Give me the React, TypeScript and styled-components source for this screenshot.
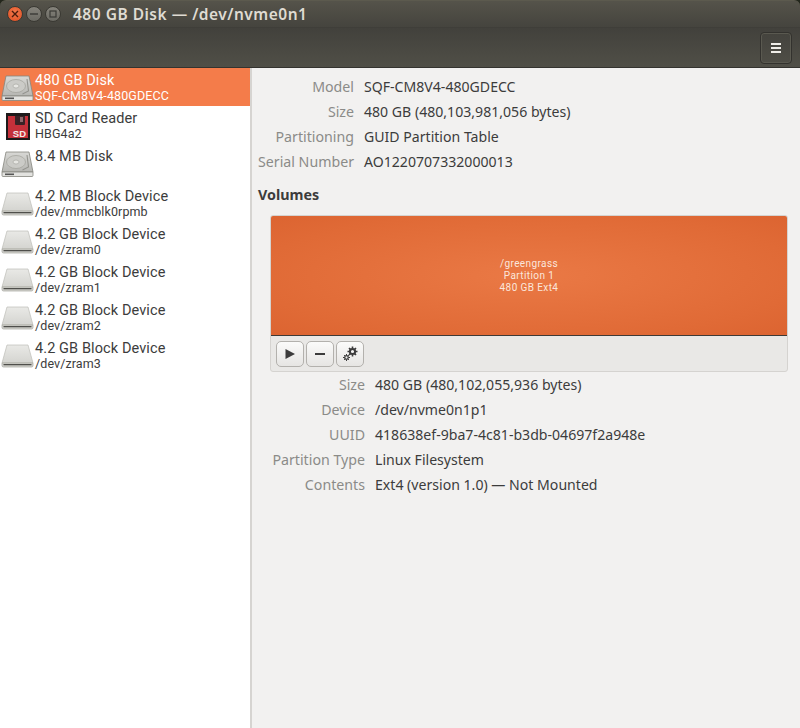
import React from 'react'
import styled, { createGlobalStyle } from 'styled-components'

const GlobalStyle = createGlobalStyle`
    html, body {
        margin: 0;
        padding: 0;
        background: #f2f1f0;
    }
    body {
        font-family: "Noto Sans", "Open Sans", sans-serif;
        color: #3c3c3c;
    }
`

const HardDiskIcon: React.FC = () => (
    <svg width="33" height="28" viewBox="0 0 33 28">
        <defs>
            <linearGradient id="hddTop" x1="0" y1="0" x2="0" y2="1">
                <stop offset="0" stopColor="#d8d8d5" />
                <stop offset="1" stopColor="#b6b6b2" />
            </linearGradient>
        </defs>
        <path d="M5 2h23l4 20H1z" fill="url(#hddTop)" stroke="#85857e" strokeWidth="0.8" />
        <path d="M1 22h31v3.5a1 1 0 0 1-1 1H2a1 1 0 0 1-1-1z" fill="#e2e2df" stroke="#85857e" strokeWidth="0.8" />
        <ellipse cx="15" cy="12" rx="9.5" ry="6.5" fill="#cbcbc7" stroke="#a0a09a" strokeWidth="0.7" />
        <ellipse cx="15" cy="12" rx="3" ry="2" fill="#e6e6e2" stroke="#a0a09a" strokeWidth="0.6" />
        <path d="M26 5l1.5 12-6 3" fill="none" stroke="#94948e" strokeWidth="1.1" />
        <rect x="4" y="23.5" width="9" height="1.6" fill="#555" />
    </svg>
)

const SdCardIcon: React.FC = () => (
    <svg width="24" height="28" viewBox="0 0 24 28">
        <path d="M0 1h24v27H0z" fill="#1d1a1a" />
        <path d="M2 4h20v22H2z" fill="#c5303a" />
        <path d="M9 4h10v8a1 1 0 0 1-1 1H10a1 1 0 0 1-1-1z" fill="#3a2226" />
        <path d="M14 5h3v5h-3z" fill="#8f6a6e" />
        <text x="20" y="24.5" textAnchor="end" fontSize="9.5" fontWeight="700" fill="#f4e8e8" fontFamily="Liberation Sans, sans-serif">SD</text>
    </svg>
)

const BlockDeviceIcon: React.FC = () => (
    <svg width="33" height="24" viewBox="0 0 33 24">
        <defs>
            <linearGradient id="blockTop" x1="0" y1="0" x2="0" y2="1">
                <stop offset="0" stopColor="#e9e9e6" />
                <stop offset="1" stopColor="#d4d4d0" />
            </linearGradient>
        </defs>
        <path d="M6 1h21l5 18H1z" fill="url(#blockTop)" stroke="#bdbdb7" strokeWidth="0.7" />
        <path d="M1 19h31v2.5a1.5 1.5 0 0 1-1.5 1.5h-28A1.5 1.5 0 0 1 1 21.5z" fill="#d4d4d0" stroke="#a3a39c" strokeWidth="0.7" />
        <rect x="2.5" y="20" width="28" height="1.3" fill="#4f4f4b" />
    </svg>
)

const devices = [
    { name: '480 GB Disk', sub: 'SQF-CM8V4-480GDECC', icon: 'disk', selected: true, height: 38 },
    { name: 'SD Card Reader', sub: 'HBG4a2', icon: 'sd', height: 38 },
    { name: '8.4 MB Disk', sub: '', icon: 'disk', height: 40 },
    { name: '4.2 MB Block Device', sub: '/dev/mmcblk0rpmb', icon: 'block', height: 38 },
    { name: '4.2 GB Block Device', sub: '/dev/zram0', icon: 'block', height: 38 },
    { name: '4.2 GB Block Device', sub: '/dev/zram1', icon: 'block', height: 38 },
    { name: '4.2 GB Block Device', sub: '/dev/zram2', icon: 'block', height: 38 },
    { name: '4.2 GB Block Device', sub: '/dev/zram3', icon: 'block', height: 38 },
]

const driveInfo = [
    ['Model', 'SQF-CM8V4-480GDECC'],
    ['Size', '480 GB (480,103,981,056 bytes)'],
    ['Partitioning', 'GUID Partition Table'],
    ['Serial Number', 'AO1220707332000013'],
]

const volumeInfo = [
    ['Size', '480 GB (480,102,055,936 bytes)'],
    ['Device', '/dev/nvme0n1p1'],
    ['UUID', '418638ef-9ba7-4c81-b3db-04697f2a948e'],
    ['Partition Type', 'Linux Filesystem'],
    ['Contents', 'Ext4 (version 1.0) — Not Mounted'],
]

const App: React.FC = () => {
    return (
        <>
            <GlobalStyle />
            <Window>
                <TitleBar>
                    <WindowButtons>
                        <CloseButton>
                            <svg width="8" height="8" viewBox="0 0 8 8">
                                <path d="M1 1l6 6M7 1l-6 6" stroke="#4a1c0c" strokeWidth="1.4" />
                            </svg>
                        </CloseButton>
                        <WindowButton>
                            <svg width="8" height="8" viewBox="0 0 8 8">
                                <path d="M0 4h8" stroke="#3a3a36" strokeWidth="1.4" />
                            </svg>
                        </WindowButton>
                        <WindowButton>
                            <svg width="8" height="8" viewBox="0 0 8 8">
                                <rect x="1" y="1" width="6" height="6" fill="none" stroke="#3a3a36" strokeWidth="1.2" />
                            </svg>
                        </WindowButton>
                    </WindowButtons>
                    <Title>480 GB Disk — /dev/nvme0n1</Title>
                </TitleBar>
                <ToolBar>
                    <MenuButton>
                        <MenuLine />
                        <MenuLine />
                        <MenuLine />
                    </MenuButton>
                </ToolBar>
                <Body>
                    <Sidebar>
                        {devices.map((device, i) => (
                            <DeviceRow key={i} $selected={device.selected} $height={device.height}>
                                <IconSlot>
                                    {device.icon === 'disk' && <HardDiskIcon />}
                                    {device.icon === 'sd' && <SdCardIcon />}
                                    {device.icon === 'block' && <BlockDeviceIcon />}
                                </IconSlot>
                                <DeviceText>
                                    <DeviceName>{device.name}</DeviceName>
                                    <DeviceSub>{device.sub}</DeviceSub>
                                </DeviceText>
                            </DeviceRow>
                        ))}
                    </Sidebar>
                    <Detail>
                        <DriveGrid>
                            {driveInfo.map(([label, value]) => (
                                <React.Fragment key={label}>
                                    <Label>{label}</Label>
                                    <Value>{value}</Value>
                                </React.Fragment>
                            ))}
                        </DriveGrid>
                        <VolumesHeading>Volumes</VolumesHeading>
                        <VolumeFrame>
                            <Partition>
                                <span>/greengrass</span>
                                <span>Partition 1</span>
                                <span>480 GB Ext4</span>
                            </Partition>
                            <VolumeToolbar>
                                <ToolButton>
                                    <svg width="12" height="12" viewBox="0 0 12 12">
                                        <path d="M1.5 1l9.5 5-9.5 5z" fill="#3c3c3c" />
                                    </svg>
                                </ToolButton>
                                <ToolButton>
                                    <svg width="12" height="12" viewBox="0 0 12 12">
                                        <path d="M1 5h10v2H1z" fill="#3c3c3c" />
                                    </svg>
                                </ToolButton>
                                <ToolButton>
                                    <svg width="16" height="16" viewBox="0 0 16 16">
                                        <g fill="none" stroke="#3c3c3c">
                                            <circle cx="10.5" cy="5.5" r="2.6" strokeWidth="2" />
                                            <path d="M10.5 0.5v2M10.5 8.5v2M5.5 5.5h2M13.5 5.5h2M7 2l1.4 1.4M12.6 7.6L14 9M14 2l-1.4 1.4M8.4 7.6L7 9" strokeWidth="1.6" />
                                            <circle cx="4.5" cy="11.5" r="1.8" strokeWidth="1.3" />
                                            <path d="M4.5 8v1.2M4.5 13.8V15M1 11.5h1.2M6.8 11.5H8M2 9l.9.9M6.1 13.1L7 14M7 9l-.9.9M2.9 13.1L2 14" strokeWidth="1" />
                                        </g>
                                    </svg>
                                </ToolButton>
                            </VolumeToolbar>
                        </VolumeFrame>
                        <VolumeGrid>
                            {volumeInfo.map(([label, value]) => (
                                <React.Fragment key={label}>
                                    <Label>{label}</Label>
                                    <Value>{value}</Value>
                                </React.Fragment>
                            ))}
                        </VolumeGrid>
                    </Detail>
                </Body>
            </Window>
        </>
    )
}

export default App

const Window = styled.div`
    width: 800px;
    height: 728px;
    display: flex;
    flex-direction: column;
    overflow: hidden;
    background: #23261c;
`

const TitleBar = styled.div`
    height: 28px;
    flex: none;
    display: flex;
    align-items: center;
    padding-left: 7px;
    gap: 12px;
    box-sizing: border-box;
    border-radius: 6px 6px 0 0;
    border-top: 1px solid #5c5a4e;
    border-bottom: 1px solid #3f3e39;
    background: linear-gradient(#55534a, #45443e);
`

const WindowButtons = styled.div`
    display: flex;
    gap: 3px;
`

const WindowButton = styled.div`
    width: 16px;
    height: 16px;
    box-sizing: border-box;
    border-radius: 50%;
    display: flex;
    align-items: center;
    justify-content: center;
    background: linear-gradient(#85837b, #6b6a63);
    border: 1px solid #3a3933;
`

const CloseButton = styled(WindowButton)`
    background: radial-gradient(circle at 50% 40%, #f47a4d, #dd4d20);
`

const Title = styled.div`
    font-size: 15.5px;
    font-weight: 600;
    letter-spacing: 0.5px;
    color: #dfdbd2;
    white-space: nowrap;
`

const ToolBar = styled.div`
    height: 40px;
    flex: none;
    box-sizing: border-box;
    display: flex;
    align-items: center;
    justify-content: flex-end;
    padding: 1px 8px 0 0;
    border-bottom: 1px solid #34332f;
    background: linear-gradient(#42413c, #504f47);
`

const MenuButton = styled.div`
    width: 32px;
    height: 32px;
    box-sizing: border-box;
    border: 1px solid #33322e;
    border-radius: 4px;
    box-shadow: inset 0 0 0 1px #5a5950;
    display: flex;
    flex-direction: column;
    align-items: center;
    justify-content: center;
    gap: 2px;
`

const MenuLine = styled.div`
    width: 10px;
    height: 2px;
    background: #efede8;
`

const Body = styled.div`
    flex: 1;
    display: flex;
    min-height: 0;
    background: #f2f1f0;
`

const Sidebar = styled.div`
    width: 252px;
    flex: none;
    box-sizing: border-box;
    background: #fff;
    border-right: 2px solid #d6d4d1;
`

const DeviceRow = styled.div<{ $selected?: boolean; $height: number }>`
    height: ${p => p.$height}px;
    display: flex;
    align-items: flex-start;
    background: ${p => (p.$selected ? '#f47c4a' : 'transparent')};
    color: ${p => (p.$selected ? '#fff' : '#3c3c3c')};
`

const IconSlot = styled.div`
    width: 35px;
    height: 38px;
    flex: none;
    display: flex;
    align-items: center;
    justify-content: center;
    padding-top: 2px;
    box-sizing: border-box;
`

const DeviceText = styled.div`
    display: flex;
    flex-direction: column;
    padding-top: 4px;
    font-family: Roboto, "Noto Sans", sans-serif;
`

const DeviceName = styled.div`
    font-size: 14.5px;
    letter-spacing: 0.1px;
    line-height: 17px;
    white-space: nowrap;
`

const DeviceSub = styled.div`
    font-size: 12.5px;
    letter-spacing: 0.1px;
    line-height: 14px;
    white-space: nowrap;
`

const Detail = styled.div`
    flex: 1;
    min-width: 0;
    display: flex;
    flex-direction: column;
    align-items: flex-start;
`

const DriveGrid = styled.div`
    display: grid;
    grid-template-columns: 96px auto;
    column-gap: 10px;
    grid-auto-rows: 25px;
    align-items: center;
    margin: 6px 0 0 6px;
`

const VolumeGrid = styled(DriveGrid)`
    grid-template-columns: 95px auto;
    margin: 0 0 0 18px;
`

const Label = styled.div`
    font-size: 14.2px;
    color: #8b8b88;
    text-align: right;
    white-space: nowrap;
`

const Value = styled.div`
    font-size: 14.1px;
    color: #3c3c3c;
    white-space: nowrap;
`

const VolumesHeading = styled.div`
    font-size: 14.3px;
    font-weight: 700;
    line-height: 20px;
    color: #3c3c3c;
    margin: 11px 0 0 6px;
`

const VolumeFrame = styled.div`
    width: 518px;
    height: 157px;
    box-sizing: border-box;
    margin: 10px 0 0 18px;
    border: 1px solid #d5d3d0;
    border-radius: 3px;
    background: #e9e8e6;
    overflow: hidden;
`

const Partition = styled.div`
    height: 120px;
    box-sizing: border-box;
    border-bottom: 1px solid #3f3a36;
    background: radial-gradient(ellipse at center, #ea7945 0%, #e06a36 75%, #dc6431 100%);
    color: #fbe6dc;
    font-family: Roboto, "Noto Sans", sans-serif;
    font-size: 10px;
    letter-spacing: 0.4px;
    line-height: 12px;
    display: flex;
    flex-direction: column;
    align-items: center;
    justify-content: center;
    padding-top: 1px;
`

const VolumeToolbar = styled.div`
    display: flex;
    gap: 2px;
    padding: 5px 0 0 5px;
`

const ToolButton = styled.div`
    width: 28px;
    height: 26px;
    box-sizing: border-box;
    border: 1px solid #b3b1ad;
    border-radius: 5px;
    background: linear-gradient(#fbfbfa, #e6e5e3);
    display: flex;
    align-items: center;
    justify-content: center;
`
